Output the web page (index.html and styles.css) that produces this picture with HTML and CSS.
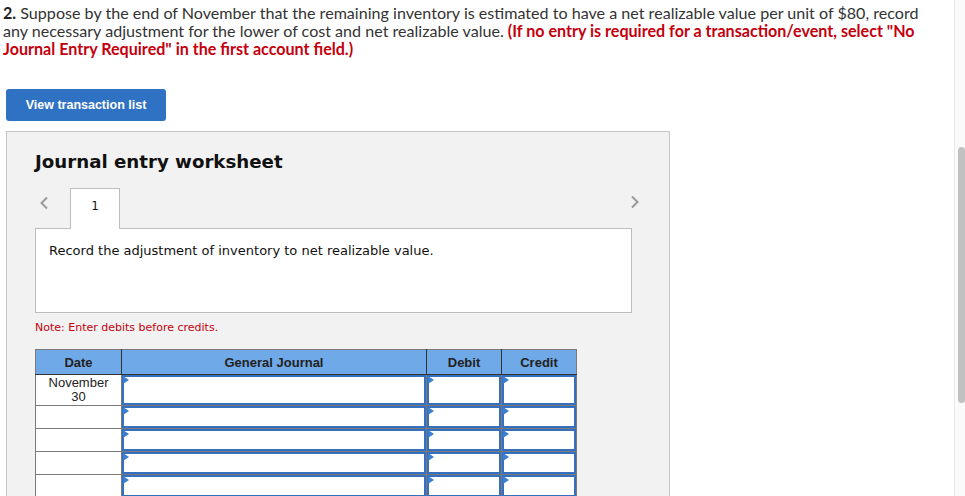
FILE: index.html
```html
<!DOCTYPE html>
<html>
<head>
<meta charset="utf-8">
<link rel="stylesheet" href="styles.css">
</head>
<body>
<div class="page">
  <div class="main">
    <p class="question"><b class="num">2.</b> Suppose by the end of November that the remaining inventory is estimated to have a net realizable value per unit of $80, record any necessary adjustment for the lower of cost and net realizable value. <b class="red">(If no entry is required for a transaction/event, select "No Journal Entry Required" in the first account field.)</b></p>
    <button class="btn">View transaction list</button>
    <div class="panel">
      <h2 class="title">Journal entry worksheet</h2>
      <div class="nav">
        <span class="chev"><svg width="10" height="14" viewBox="0 0 10 14"><path d="M8 1.5 L2.5 7 L8 12.5" fill="none" stroke="#9a9a9a" stroke-width="2"/></svg></span>
        <div class="tab">1</div>
        <div class="spacer"></div>
        <span class="chev right"><svg width="10" height="14" viewBox="0 0 10 14"><path d="M2 1.5 L7.5 7 L2 12.5" fill="none" stroke="#9a9a9a" stroke-width="2"/></svg></span>
      </div>
      <div class="box">Record the adjustment of inventory to net realizable value.</div>
      <p class="note">Note: Enter debits before credits.</p>
      <table class="journal">
        <colgroup><col class="c-date"><col class="c-gj"><col class="c-amt"><col class="c-amt"></colgroup>
        <thead>
          <tr><th>Date</th><th>General Journal</th><th>Debit</th><th>Credit</th></tr>
        </thead>
        <tbody>
          <tr class="first"><td class="date">November<br>30</td><td class="in"><div class="field"><i class="tri"></i></div></td><td class="in"><div class="field"><i class="tri"></i></div></td><td class="in"><div class="field"><i class="tri"></i></div></td></tr>
          <tr><td class="date"></td><td class="in"><div class="field"><i class="tri"></i></div></td><td class="in"><div class="field"><i class="tri"></i></div></td><td class="in"><div class="field"><i class="tri"></i></div></td></tr>
          <tr><td class="date"></td><td class="in"><div class="field"><i class="tri"></i></div></td><td class="in"><div class="field"><i class="tri"></i></div></td><td class="in"><div class="field"><i class="tri"></i></div></td></tr>
          <tr><td class="date"></td><td class="in"><div class="field"><i class="tri"></i></div></td><td class="in"><div class="field"><i class="tri"></i></div></td><td class="in"><div class="field"><i class="tri"></i></div></td></tr>
          <tr><td class="date"></td><td class="in"><div class="field"><i class="tri"></i></div></td><td class="in"><div class="field"><i class="tri"></i></div></td><td class="in"><div class="field"><i class="tri"></i></div></td></tr>
        </tbody>
      </table>
    </div>
  </div>
  <div class="scrollbar"><div class="thumb"></div></div>
</div>
</body>
</html>
```
FILE: styles.css
```css
html, body {
  margin: 0;
  padding: 0;
  background: #fff;
}
.page {
  display: flex;
  width: 965px;
  height: 496px;
  overflow: hidden;
}
.main {
  flex: 1;
  min-width: 0;
}
.question {
  margin: 0;
  width: 925px;
  padding: 4px 0 0 3px;
  font-family: "Lato", "Open Sans", sans-serif;
  font-size: 16.1px;
  line-height: 18px;
  color: #333;
}
.question .num { color: #222; }
.question .red { color: #c4000d; }
.btn {
  display: block;
  margin: 31px 0 0 6px;
  width: 160px;
  height: 32px;
  border: 0;
  border-radius: 3px;
  background: #2f72c3;
  color: #fff;
  font-family: "Liberation Sans", Arial, sans-serif;
  font-weight: bold;
  font-size: 12.5px;
  padding: 0;
}
.panel {
  margin: 10px 0 0 6px;
  width: 664px;
  height: 400px;
  background: #f2f2f2;
  border: 1px solid #c6c6c6;
  padding: 0 37px 0 28px;
  box-sizing: border-box;
}
.title {
  margin: 19px 0 0 0;
  font-family: "DejaVu Sans", Verdana, sans-serif;
  font-weight: bold;
  font-size: 18.2px;
  line-height: 22px;
  color: #111;
}
.nav {
  display: flex;
  align-items: flex-start;
  margin-top: 15px;
  height: 40px;
}
.chev {
  width: 35px;
  padding: 8px 0 0 4px;
  box-sizing: border-box;
}
.chev.right {
  width: 12px;
  padding: 7px 0 0 2px;
  margin-right: -8px;
}
.tab {
  width: 50px;
  height: 41px;
  box-sizing: border-box;
  background: #fff;
  border: 1px solid #bdbdbd;
  border-bottom: 0;
  position: relative;
  z-index: 1;
  text-align: center;
  font-family: "DejaVu Sans", Verdana, sans-serif;
  font-size: 12px;
  line-height: 34px;
  color: #111;
}
.spacer { flex: 1; }
.box {
  height: 85px;
  box-sizing: border-box;
  background: #fff;
  border: 1px solid #bdbdbd;
  padding: 14px 13px;
  font-family: "DejaVu Sans", Verdana, sans-serif;
  font-size: 13px;
  line-height: 16px;
  color: #111;
}
.note {
  margin: 8px 0 0 0;
  font-family: "DejaVu Sans", Verdana, sans-serif;
  font-size: 11px;
  line-height: 14px;
  color: #c4000d;
}
.journal {
  margin-top: 14px;
  border-collapse: collapse;
  width: 541px;
  table-layout: fixed;
  font-family: "Liberation Sans", Arial, sans-serif;
  font-size: 13px;
}
.c-date { width: 86px; }
.c-gj { width: 305px; }
.c-amt { width: 75px; }
.journal th {
  height: 24px;
  padding: 0;
  background: #70a9e8;
  color: #222;
  font-weight: bold;
  border: 1px solid #333;
  border-top-color: #7a7a7a;
}
.journal th:first-child { border-left-color: #7a7a7a; }
.journal th:last-child { border-right-color: #7a7a7a; }
.journal td {
  border: 1px solid #7a7a7a;
  padding: 0;
  background: #fff;
  vertical-align: top;
}
.journal td.date {
  text-align: center;
  color: #222;
  line-height: 14px;
  padding-top: 1px;
}
.field {
  box-sizing: border-box;
  border: 2px solid #3570c0;
  position: relative;
  height: 22px;
}
.journal tr.first .field { height: 30px; }
.tri {
  position: absolute;
  left: -1px;
  top: -1px;
  width: 0;
  height: 0;
  border-top: 4px solid transparent;
  border-bottom: 4px solid transparent;
  border-left: 6px solid #3a7fd2;
}
.scrollbar {
  width: 11px;
  flex: none;
  border-left: 1px solid #e8e8e8;
  background: #fafafa;
  padding: 147px 1px 0 3px;
  box-sizing: border-box;
}
.thumb {
  width: 7px;
  height: 256px;
  border-radius: 4px;
  background: #c1c1c1;
}
```
